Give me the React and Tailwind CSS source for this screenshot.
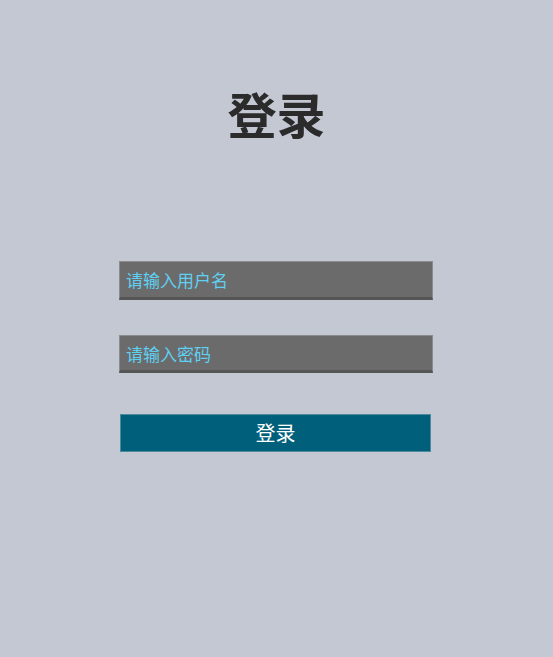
import React from "react";

export default function App() {
  return (
    <div className="min-h-[657px] w-full bg-[#c4c8d3] flex flex-col items-center font-['Noto_Sans_CJK_SC',sans-serif]">
      <h1 className="mt-[88px] text-[49px] leading-none font-bold text-[#2b2b2b]">登录</h1>

      <div className="mt-[124px] w-[315px] pr-[1px] flex flex-col">
        <input
          type="text"
          placeholder="请输入用户名"
          className="h-[39px] w-full bg-[#6b6b6b] border border-[#8c8c8c] border-b-[3px] border-b-[#555555] px-[6px] text-[17px] text-white outline-none placeholder:text-[#5fd0f2]"
        />
        <input
          type="password"
          placeholder="请输入密码"
          className="mt-[35px] h-[38px] w-full bg-[#6b6b6b] border border-[#8c8c8c] border-b-[3px] border-b-[#555555] px-[6px] text-[17px] text-white outline-none placeholder:text-[#5fd0f2]"
        />
        <button className="mt-[41px] ml-[1px] h-[38px] w-[311px] bg-[#005f7a] border border-[#4c8a9c] text-white text-[20px]">
          登录
        </button>
      </div>
    </div>
  );
}
